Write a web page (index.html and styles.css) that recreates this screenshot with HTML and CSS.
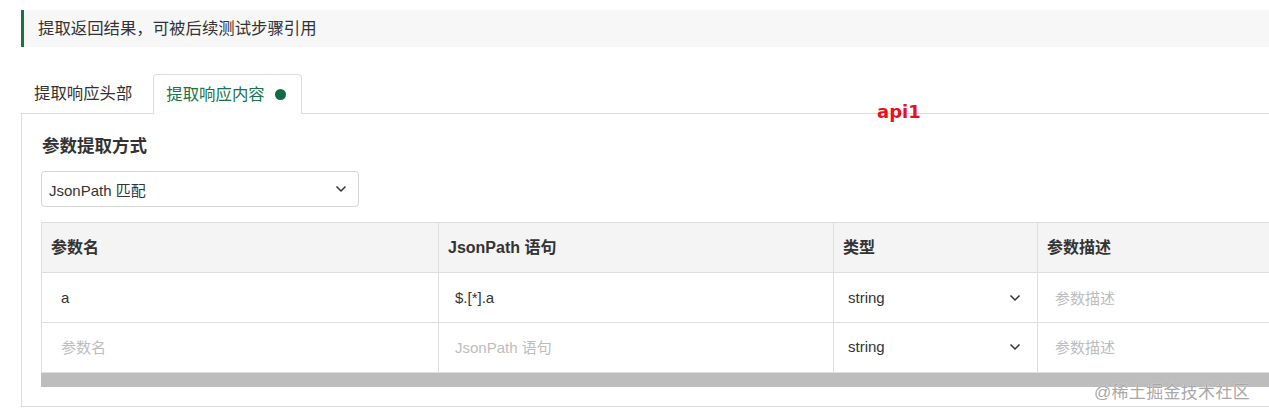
FILE: index.html
```html
<!DOCTYPE html>
<html lang="zh">
<head>
<meta charset="utf-8">
<title>提取返回结果</title>
<link rel="stylesheet" href="styles.css">
</head>
<body>
<div class="page">
  <div class="banner">提取返回结果，可被后续测试步骤引用</div>
  <div class="tabs">
    <div class="tab">提取响应头部</div>
    <div class="tab active">提取响应内容<span class="dot"></span></div>
  </div>
  <div class="panel">
    <div class="title">参数提取方式</div>
    <div class="select">
      <span>JsonPath 匹配</span>
      <svg class="chev" width="12" height="8" viewBox="0 0 12 8"><path d="M1.5 1.5 L6 6 L10.5 1.5" fill="none" stroke="#333" stroke-width="1.5"/></svg>
    </div>
    <div class="tablewrap">
      <table class="grid">
        <colgroup>
          <col class="c1"><col class="c2"><col class="c3"><col class="c4">
        </colgroup>
        <thead>
          <tr><th>参数名</th><th>JsonPath 语句</th><th>类型</th><th>参数描述</th></tr>
        </thead>
        <tbody>
          <tr>
            <td><span class="val v1">a</span></td>
            <td><span class="val v2">$.[*].a</span></td>
            <td><div class="cellsel"><span>string</span><svg class="chev" width="12" height="8" viewBox="0 0 12 8"><path d="M1.5 1.5 L6 6 L10.5 1.5" fill="none" stroke="#333" stroke-width="1.5"/></svg></div></td>
            <td><span class="val ph v4">参数描述</span></td>
          </tr>
          <tr>
            <td><span class="val ph v1">参数名</span></td>
            <td><span class="val ph v2">JsonPath 语句</span></td>
            <td><div class="cellsel"><span>string</span><svg class="chev" width="12" height="8" viewBox="0 0 12 8"><path d="M1.5 1.5 L6 6 L10.5 1.5" fill="none" stroke="#333" stroke-width="1.5"/></svg></div></td>
            <td><span class="val ph v4">参数描述</span></td>
          </tr>
        </tbody>
      </table>
      <div class="scrollbar"></div>
    </div>
  </div>
  <div class="api">api1</div>
  <div class="watermark">@稀土掘金技术社区</div>
</div>
</body>
</html>
```

FILE: styles.css
```css
html, body {
  margin: 0;
  padding: 0;
  background: #fff;
  overflow: hidden;
}
body {
  font-family: "Liberation Sans", "Noto Sans CJK SC", sans-serif;
  color: #333;
  width: 1269px;
  height: 417px;
}
.page {
  position: relative;
  width: 1269px;
  height: 417px;
  box-sizing: border-box;
  overflow: hidden;
  padding: 10px 0 0 21px;
}
.banner {
  height: 37px;
  line-height: 37px;
  border-left: 3px solid #17734b;
  background: #f7f7f7;
  padding-left: 14px;
  font-size: 16.4px;
  color: #333;
}
.tabs {
  margin-top: 27px;
  display: flex;
  align-items: flex-end;
  height: 39px;
  border-bottom: 1px solid #dcdcdc;
  padding-left: 1px;
}
.tab {
  height: 39px;
  line-height: 39px;
  font-size: 16.4px;
  padding: 0 21px 0 12px;
  color: #333;
  box-sizing: border-box;
}
.tab.active {
  border: 1px solid #dcdcdc;
  border-bottom: none;
  border-radius: 4px 4px 0 0;
  background: #fff;
  height: 40px;
  margin-bottom: -1px;
  color: #17734b;
  padding: 0 15px 0 12px;
  display: flex;
  align-items: center;
}
.dot {
  width: 11px;
  height: 11px;
  border-radius: 50%;
  background: #0f6b43;
  margin-left: 10px;
}
.panel {
  width: 1400px;
  border: 1px solid #dcdcdc;
  border-top: none;
  padding: 20px 0 19px 19px;
  box-sizing: border-box;
}
.title {
  font-size: 17.5px;
  font-weight: bold;
  line-height: 24px;
  color: #333;
  padding-left: 1px;
}
.select {
  margin-top: 13px;
  width: 318px;
  height: 36px;
  box-sizing: border-box;
  border: 1px solid #d6d6d6;
  border-radius: 4px;
  display: flex;
  align-items: center;
  justify-content: space-between;
  padding: 0 11px 0 7px;
  font-size: 15px;
  color: #333;
}
.tablewrap {
  margin-top: 15px;
  width: 1340px;
}
.grid {
  border-collapse: collapse;
  table-layout: fixed;
  width: 1340px;
}
.c1 { width: 397px; }
.c2 { width: 395px; }
.c3 { width: 204px; }
.c4 { width: 344px; }
.grid th, .grid td {
  border: 1px solid #dedede;
  box-sizing: border-box;
  text-align: left;
}
.grid th {
  height: 50px;
  background: #f4f4f4;
  font-size: 16px;
  font-weight: bold;
  padding: 0 0 3px 9px;
  color: #333;
}
.grid td {
  height: 50px;
  padding: 0;
  font-size: 15px;
}
.grid tbody tr:last-child td {
  padding-bottom: 2px;
}
.val {
  display: block;
  color: #333;
}
.val.ph { color: #bdbdbd; }
.v1 { padding-left: 19px; }
.v2 { padding-left: 16px; }
.v4 { padding-left: 17px; }
.cellsel {
  display: flex;
  align-items: center;
  justify-content: space-between;
  padding: 0 16px 0 14px;
  color: #333;
}
.scrollbar {
  height: 14px;
  background: #bdbdbd;
}
.api {
  position: absolute;
  left: 877px;
  top: 100px;
  font-family: "DejaVu Sans", sans-serif;
  font-weight: bold;
  font-size: 18px;
  color: #e8101f;
  line-height: 24px;
}
.watermark {
  position: absolute;
  left: 1094px;
  top: 381px;
  font-size: 17px;
  line-height: 24px;
  color: #a8a8a8;
  letter-spacing: 0.3px;
  text-shadow: 0 0 1px #fff;
}
```
